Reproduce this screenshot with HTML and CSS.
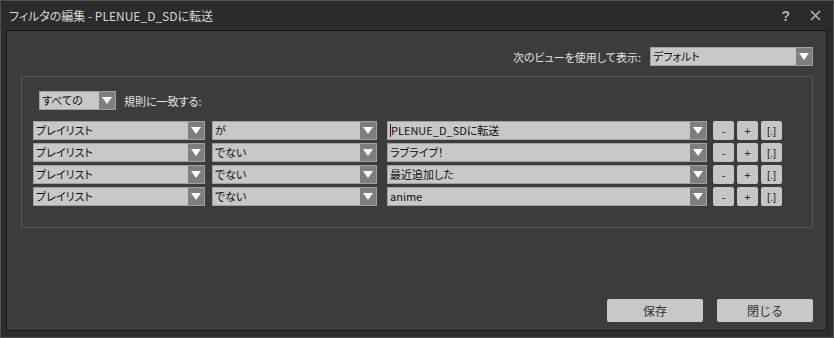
FILE: index.html
```html
<!DOCTYPE html>
<html lang="ja">
<head>
    <meta charset="UTF-8">
    <title>フィルタの編集</title>
    <link rel="stylesheet" href="styles.css">
</head>
<body>
    <div class="jendela">
        <div class="judul">
            <span class="judul-teks">フィルタの編集 - PLENUE_D_SDに転送</span>
            <span class="tanya">?</span>
            <svg class="tutup" width="11" height="11" viewBox="0 0 11 11">
                <path d="M1 1 L10 10 M10 1 L1 10" stroke="#b4b4b4" stroke-width="1.6"/>
            </svg>
        </div>

        <div class="panel">
            <div class="baris-view">
                <span class="label">次のビューを使用して表示:</span>
                <div class="pilih pilih-view">
                    <span class="isi">デフォルト</span>
                    <span class="panah"></span>
                </div>
            </div>

            <div class="grup">
                <div class="baris-cocok">
                    <div class="pilih pilih-semua">
                        <span class="isi">すべての</span>
                        <span class="panah"></span>
                    </div>
                    <span class="label">規則に一致する:</span>
                </div>

                <div class="aturan">
                    <div class="pilih kol1"><span class="isi">プレイリスト</span><span class="panah"></span></div>
                    <div class="pilih kol2"><span class="isi">が</span><span class="panah"></span></div>
                    <div class="pilih kol3"><span class="isi"><i class="kursor"></i>PLENUE_D_SDに転送</span><span class="panah"></span></div>
                    <button class="kecil">-</button>
                    <button class="kecil">+</button>
                    <button class="kecil">[.]</button>
                </div>
                <div class="aturan">
                    <div class="pilih kol1"><span class="isi">プレイリスト</span><span class="panah"></span></div>
                    <div class="pilih kol2"><span class="isi">でない</span><span class="panah"></span></div>
                    <div class="pilih kol3"><span class="isi">ラブライブ！</span><span class="panah"></span></div>
                    <button class="kecil">-</button>
                    <button class="kecil">+</button>
                    <button class="kecil">[.]</button>
                </div>
                <div class="aturan">
                    <div class="pilih kol1"><span class="isi">プレイリスト</span><span class="panah"></span></div>
                    <div class="pilih kol2"><span class="isi">でない</span><span class="panah"></span></div>
                    <div class="pilih kol3"><span class="isi">最近追加した</span><span class="panah"></span></div>
                    <button class="kecil">-</button>
                    <button class="kecil">+</button>
                    <button class="kecil">[.]</button>
                </div>
                <div class="aturan">
                    <div class="pilih kol1"><span class="isi">プレイリスト</span><span class="panah"></span></div>
                    <div class="pilih kol2"><span class="isi">でない</span><span class="panah"></span></div>
                    <div class="pilih kol3"><span class="isi">anime</span><span class="panah"></span></div>
                    <button class="kecil">-</button>
                    <button class="kecil">+</button>
                    <button class="kecil">[.]</button>
                </div>
            </div>

            <div class="tombol-bawah">
                <button class="besar">保存</button>
                <button class="besar">閉じる</button>
            </div>
        </div>
    </div>
</body>
</html>
```

FILE: styles.css
```css
body {
    margin: 0;
    padding: 0;
    background-color: #2b2b2b;
    font-family: "Noto Sans CJK JP", "Liberation Sans", sans-serif;
    font-feature-settings: "palt";
}
.jendela {
    box-sizing: border-box;
    width: 834px;
    height: 338px;
    background-color: #2b2b2b;
    border: 1px solid #505050;
    padding: 0 6px 6px 5px;
    display: flex;
    flex-direction: column;
}
.judul {
    height: 29px;
    display: flex;
    align-items: center;
    color: #d6d6d6;
    font-size: 12px;
}
.judul-teks {
    margin-left: 3px;
    flex-grow: 1;
}
.tanya {
    font-family: "Liberation Sans", sans-serif;
    font-weight: bold;
    font-size: 14px;
    color: #b4b4b4;
    margin-right: 20px;
}
.tutup {
    margin-right: 6px;
}
.panel {
    flex-grow: 1;
    background-color: #3c3c3c;
    border: 1px solid #151515;
    padding: 16px 13px 8px 14px;
    display: flex;
    flex-direction: column;
}
.label {
    color: #e2e2e2;
    font-size: 11px;
}
.baris-view {
    display: flex;
    justify-content: flex-end;
    align-items: center;
    gap: 9px;
}
.pilih {
    box-sizing: border-box;
    height: 19px;
    display: flex;
    background-color: #c8c8c8;
    border: 1px solid #a0a0a0;
}
.pilih .isi {
    flex-grow: 1;
    font-size: 11px;
    line-height: 17px;
    padding-left: 2px;
    color: #111;
    white-space: nowrap;
    overflow: hidden;
}
.pilih .panah {
    width: 16px;
    background-color: #7e7e7e;
    display: flex;
    align-items: center;
    justify-content: center;
}
.pilih .panah::after {
    content: "";
    border-left: 5px solid transparent;
    border-right: 5px solid transparent;
    border-top: 7px solid #ffffff;
}
.pilih-view {
    width: 163px;
}
.grup {
    box-sizing: border-box;
    height: 152px;
    margin-top: 10px;
    border: 1px solid #575757;
    padding: 14px 11px 0 11px;
}
.baris-cocok {
    display: flex;
    align-items: center;
    gap: 8px;
    margin-left: 6px;
    margin-bottom: 11px;
}
.pilih-semua {
    width: 77px;
}
.aturan {
    display: flex;
    margin-bottom: 3px;
}
.kol1 {
    width: 172px;
    margin-right: 7px;
}
.kol2 {
    width: 165px;
    margin-right: 10px;
}
.kol3 {
    width: 320px;
    margin-right: 6px;
}
.kursor {
    display: inline-block;
    width: 1px;
    height: 13px;
    background-color: #700000;
    vertical-align: -2px;
}
.kecil {
    box-sizing: border-box;
    width: 21px;
    height: 19px;
    margin-right: 3px;
    padding: 0;
    border: none;
    border-radius: 2px;
    background-color: #c6c6c6;
    color: #2a2a2a;
    font-family: "Liberation Sans", sans-serif;
    font-size: 11px;
}
.tombol-bawah {
    margin-top: auto;
    display: flex;
    justify-content: flex-end;
    gap: 14px;
}
.besar {
    width: 96px;
    height: 23px;
    border: none;
    border-radius: 2px;
    background-color: #c8c8c8;
    color: #333;
    font-family: "Noto Sans CJK JP", sans-serif;
    font-size: 12px;
    padding: 0;
}
```
